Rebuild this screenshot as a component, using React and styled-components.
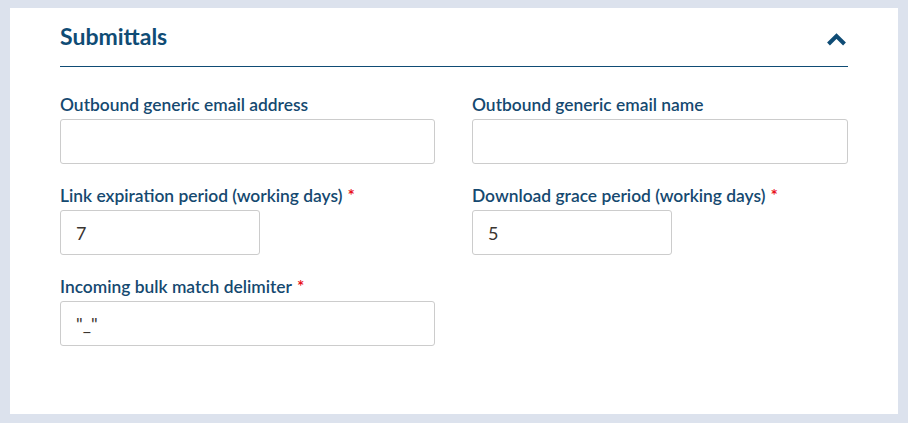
import React from 'react'
import styled, { createGlobalStyle } from 'styled-components'

const GlobalStyle = createGlobalStyle`
    html, body {
        margin: 0;
        padding: 0;
        background: #dce2ed;
        font-family: Lato, "Open Sans", sans-serif;
    }
    * { box-sizing: border-box; }
`

const Page = styled.div`
    padding: 8px 10px 9px 10px;
    height: 423px;
`

const Card = styled.section`
    background: #ffffff;
    height: 406px;
    padding: 14px 50px 0 50px;
`

const Header = styled.div`
    display: flex;
    align-items: flex-start;
    justify-content: space-between;
    height: 45px;
    border-bottom: 1.5px solid #0f4c75;
`

const Title = styled.h2`
    margin: 0;
    font-size: 23px;
    line-height: 28px;
    font-weight: 700;
    color: #0f4c75;
`

const Toggle = styled.button`
    border: 0;
    background: none;
    padding: 0;
    margin: 10px 1px 0 0;
    display: flex;
    cursor: pointer;
`

const Grid = styled.div`
    display: grid;
    grid-template-columns: 375px 376px;
    column-gap: 37px;
    row-gap: 21px;
    padding-top: 27px;
`

const Field = styled.div`
    display: flex;
    flex-direction: column;
    gap: 3px;
`

const Label = styled.label`
    font-size: 17.4px;
    font-weight: 600;
    color: #154970;
    line-height: 22px;
`

const Req = styled.span`
    color: #e8101a;
    margin-left: 5px;
`

const Input = styled.input`
    width: ${p => p.$w || '100%'};
    height: 45px;
    border: 1px solid #cccccc;
    border-radius: 3px;
    padding: 0 15px;
    font-family: Lato, "Open Sans", sans-serif;
    font-size: 18px;
    color: #3a3530;
    outline: none;
`

const Chevron = () => (
    <svg width="21" height="14" viewBox="0 0 21 14">
        <path d="M2.5 12 L10.5 4 L18.5 12" fill="none" stroke="#0f4c75" strokeWidth="4" />
    </svg>
)

const App = () => {
    return (
        <Page>
            <GlobalStyle />
            <Card>
                <Header>
                    <Title>Submittals</Title>
                    <Toggle aria-label="Collapse"><Chevron /></Toggle>
                </Header>
                <Grid>
                    <Field>
                        <Label>Outbound generic email address</Label>
                        <Input defaultValue="" />
                    </Field>
                    <Field>
                        <Label>Outbound generic email name</Label>
                        <Input defaultValue="" />
                    </Field>
                    <Field>
                        <Label>Link expiration period (working days)<Req>*</Req></Label>
                        <Input $w="200px" defaultValue="7" />
                    </Field>
                    <Field>
                        <Label>Download grace period (working days)<Req>*</Req></Label>
                        <Input $w="200px" defaultValue="5" />
                    </Field>
                    <Field>
                        <Label>Incoming bulk match delimiter<Req>*</Req></Label>
                        <Input defaultValue={'"_"'} />
                    </Field>
                </Grid>
            </Card>
        </Page>
    )
}

export default App
